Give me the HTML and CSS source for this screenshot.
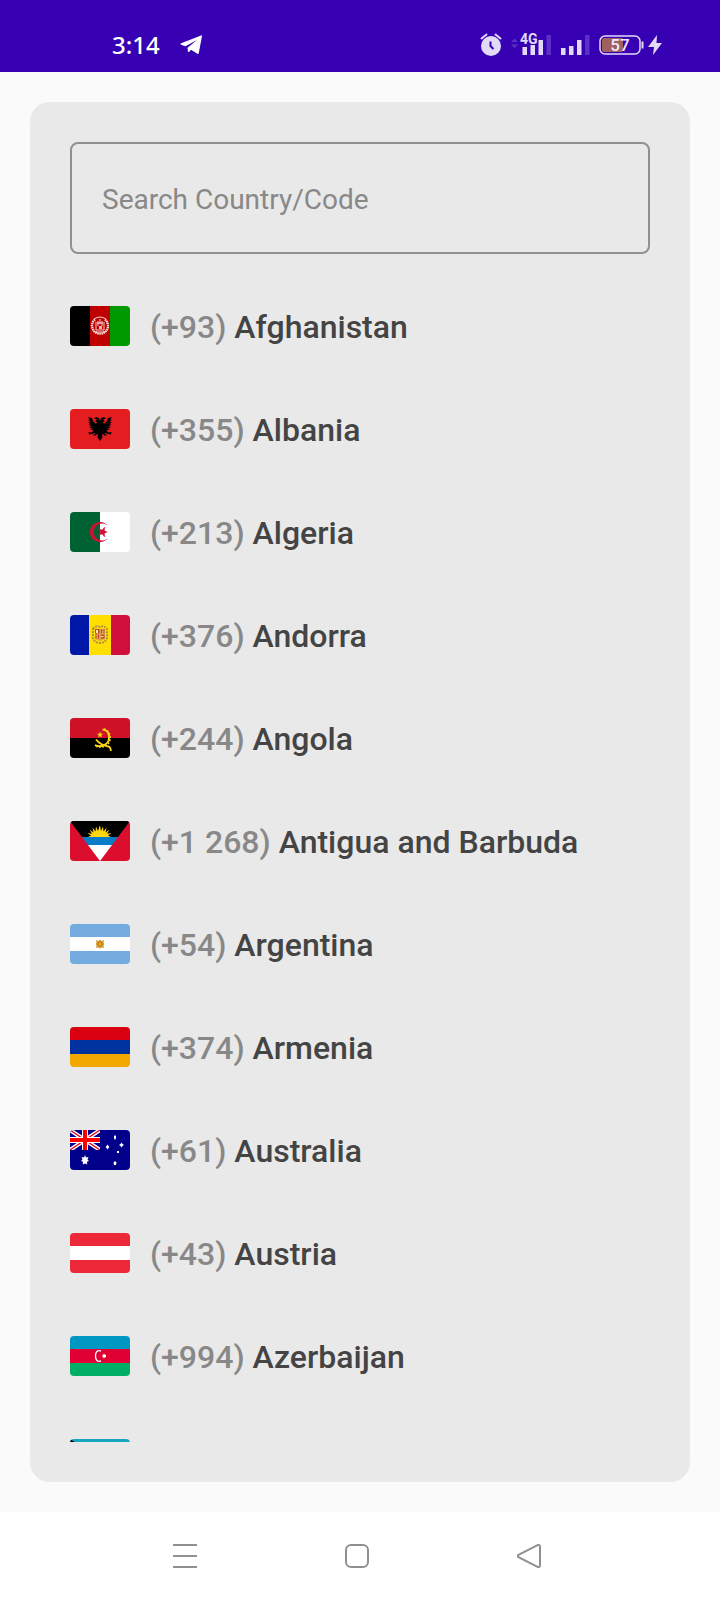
FILE: index.html
```html
<!DOCTYPE html>
<html lang="en">
<head>
<meta charset="utf-8">
<meta name="viewport" content="width=device-width, initial-scale=1">
<title>Select country</title>
<link rel="stylesheet" href="styles.css">
</head>
<body>
<div class="app">
  <header class="status">
    <div class="status-left">
      <time class="clock">3:14</time>
      <svg width="23" height="20" viewBox="0 0 23 20" aria-hidden="true"><path d="M22 1 L18.800 18 Q18.500 19.400 17 18.600 L11 14.700 L9.500 16.500 Q8 18 7.800 15.500 L7.500 12.800 L17 5 L5.500 11.200 L1 9.700 Q-.3 9 1.200 8.200 L21 .4 Q22.300 0 22 1Z" fill="#fff"/></svg>
    </div>
    <div class="status-right">
      <svg width="22" height="24" viewBox="0 0 22 24" aria-hidden="true"><g fill="none" stroke="#e3daf7"><path d="M1.500 5.500 L6.500 1.500 M15.500 1.500 L20.500 5.500" stroke-width="2" stroke-linecap="round"/></g><circle cx="11" cy="13" r="10" fill="#e3daf7"/><path d="M10.500 8.500V13L13.500 16" fill="none" stroke="#3700b3" stroke-width="2"/></svg>
      <svg width="41" height="30" viewBox="0 -4 41 30" aria-hidden="true"><path d="M0 8 L3.500 4.500 L7 8Z M0 10.500 L3.500 14 L7 10.500Z" fill="#5b30c4"/><path d="M11.500 13h4.500v8h-4.500z M19.500 11h4.500v10h-4.500z M27.500 6h4.500v15h-4.500z" fill="#e3daf7"/><path d="M35.500 1h4.500v20h-4.500z" fill="#5b30c4"/><text class="network" x="9" y="10">4G</text></svg>
      <svg width="29" height="22" viewBox="0 0 29 22" aria-hidden="true"><path d="M0 14h4.500v7h-4.500z M8 12h4.500v9h-4.500z M16 6h4.500v15h-4.500z" fill="#e3daf7"/><path d="M24 1h4.500v20h-4.500z" fill="#5b30c4"/></svg>
      <svg class="battery" width="45" height="22" viewBox="0 0 45 22" role="img" aria-label="Battery 57 percent"><rect x="3" y="4" width="21" height="14" rx="2" fill="#a0605f"/><rect x="1" y="2" width="40" height="18" rx="5" fill="none" stroke="#e3daf7" stroke-width="1.500"/><path d="M43.500 7.500v7" stroke="#e3daf7" stroke-width="2"/><text class="charge" x="21" y="17" text-anchor="middle">57</text></svg>
      <svg width="14" height="22" viewBox="0 0 14 22" aria-hidden="true"><path d="M9 1 L0 13 H6 L5 21 L14 9 H8.500Z" fill="#e3daf7"/></svg>
    </div>
  </header>

  <main class="content">
    <section class="card">
      <input class="search" type="text" placeholder="Search Country/Code" aria-label="Search Country/Code">
      <ul class="list">
        <li class="row">
          <svg class="flag" viewBox="0 0 60 40" aria-hidden="true"><path fill="#000" d="M0 0h20v40H0z"/><path fill="#bf0000" d="M20 0h20v40H20z"/><path fill="#090" d="M40 0h20v40H40z"/><g fill="none" stroke="#fff"><path d="M25 13.500A8 8 0 1 0 35 13.500" stroke-width="2.200" stroke-dasharray="1.500 .6" opacity=".9"/><path d="M24 13q6-4 12 0M26 16v8h8v-8M27 17h6M28 15v5M32 15v5M25 26h10M30 13v5" opacity=".8"/></g><path d="M29 20h3v3h-3z" fill="#e7bcab"/></svg>
          <span class="label"><span class="code">(+93)</span> Afghanistan</span>
        </li>
        <li class="row">
          <svg class="flag" viewBox="0 0 60 40" aria-hidden="true"><path fill="#e41e20" d="M0 0h60v40H0z"/><path d="M30 12L29 9L26 8L24 9.500L27 10.500L25 12L27 13L26 15L23 12L22 9L18 8L20 10.500L18 10.500L20.500 13L18 13L21 15.500L18.500 15.500L21.500 18L19 18L22.500 20L20 20.500L24 21.500L21 23.500L18.500 23L19 25.500L22 25L25.500 23.500L23 26.500L25.500 26.500L28 24.500L27.500 28.500L30 32L32.500 28.500L32 24.500L34.500 26.500L37 26.500L34.500 23.500L38 25L41 25.500L41.500 23L39 23.500L36 21.500L40 20.500L37.500 20L41 18L38.500 18L41.500 15.500L39 15.500L42 13L39.500 13L42 10.500L40 10.500L42 8L38 9L37 12L34 15L33 13L35 12L33 10.500L36 9.500L34 8L31 9Z"/></svg>
          <span class="label"><span class="code">(+355)</span> Albania</span>
        </li>
        <li class="row">
          <svg class="flag" viewBox="0 0 60 40" aria-hidden="true"><path fill="#fff" d="M0 0h60v40H0z"/><path fill="#006233" d="M0 0h30v40H0z"/><path fill="#d21034" d="M37.500 13.500A10 10 0 1 0 37.500 26.500A8.400 8.400 0 1 1 37.500 13.500ZM38 20l-3.300 1.300.1 4.200-2.600-3.300-4.200 1.300 2.400-3.500-2.400-3.500 4.200 1.300 2.600-3.300-.1 4.200z"/></svg>
          <span class="label"><span class="code">(+213)</span> Algeria</span>
        </li>
        <li class="row">
          <svg class="flag" viewBox="0 0 60 40" aria-hidden="true"><path fill="#0018a8" d="M0 0h19v40H0z"/><path fill="#fedf00" d="M19 0h22v40H19z"/><path fill="#d0103a" d="M41 0h19v40H41z"/><path d="M23 14q3-4 7-2q4-2 7 2v9q-2 5-7 5t-7-5z" fill="none" stroke="#b3923f" stroke-width="2" stroke-dasharray="2 1"/><path fill="#d9a34c" d="M25 14h10v10l-5 2-5-2z"/><path fill="#c7462b" d="M25 14h4.500v4.500H25zM25.500 19.500h1v4h-1zM28 19.500h1v4h-1zM31 14h1v4h-1zM33.500 14h1v4h-1zM31 19.500h3.500v4H31z"/><path fill="#ffedb1" d="M26 15h2v3h-2zM31 21h2.500v1H31z"/></svg>
          <span class="label"><span class="code">(+376)</span> Andorra</span>
        </li>
        <li class="row">
          <svg class="flag" viewBox="0 0 60 40" aria-hidden="true"><path fill="#ce1126" d="M0 0h60v20H0z"/><path fill="#000" d="M0 20h60v20H0z"/><g fill="none" stroke="#f9d616"><path d="M32.500 11.500C41 12 41.500 25 33 27.500Q28.500 29 25 27" stroke-width="2"/><path d="M34 11C42.500 13 42 27 34 28.500Q29 30 25 28" stroke-width="1.500" stroke-dasharray="1.800 1.500"/><path d="M26 21.500q4 5.500 14 7.500M40 29l1 4" stroke-width="1.800"/></g><path fill="#f9d616" d="M30 13.500l.8 2.200 2.400.1-1.900 1.500.7 2.300-2-1.300-2 1.300.7-2.300-1.900-1.500 2.400-.1z"/></svg>
          <span class="label"><span class="code">(+244)</span> Angola</span>
        </li>
        <li class="row">
          <svg class="flag" viewBox="0 0 60 40" aria-hidden="true"><path fill="#db0f2d" d="M0 0h60v40H0z"/><path fill="#000" d="M0 0h60L48 16H12z"/><path fill="#0b7dc8" d="M12 16h36l-6 8H18z"/><path fill="#fff" d="M18 24h24L30 40z"/><path fill="#ffd60f" d="M18 16l3-1.500-3.500-2.500 4.500.8-2.500-4.300 4 3-1-5 3 4 .5-5 2 4.500L30 4l1 6 2-4.500.5 5 3-4-1 5 4-3-2.500 4.300 4.500-.8-3.500 2.500 3 1.500z"/></svg>
          <span class="label"><span class="code">(+1 268)</span> Antigua and Barbuda</span>
        </li>
        <li class="row">
          <svg class="flag" viewBox="0 0 60 40" aria-hidden="true"><path fill="#74acdf" d="M0 0h60v40H0z"/><path fill="#fff" d="M0 13h60v14H0z"/><path fill="#d49a36" d="M26 16l2.500 1 1.500-1.500 1.500 1.500 2.500-1-.5 2.500 1 1.500-1 1.500.5 2.500-2.500-.5-1.500 1-1.500-1-2.500.5.500-2.500-1-1.500 1-1.500z"/><circle cx="30" cy="20" r="2" fill="#f6b40e" stroke="#b5701a"/></svg>
          <span class="label"><span class="code">(+54)</span> Argentina</span>
        </li>
        <li class="row">
          <svg class="flag" viewBox="0 0 60 40" aria-hidden="true"><path fill="#d90012" d="M0 0h60v13H0z"/><path fill="#0033a0" d="M0 13h60v14H0z"/><path fill="#f2a800" d="M0 27h60v13H0z"/></svg>
          <span class="label"><span class="code">(+374)</span> Armenia</span>
        </li>
        <li class="row">
          <svg class="flag" viewBox="0 0 60 40" aria-hidden="true"><path fill="#00008b" d="M0 0h60v40H0z"/><svg width="30" height="20" viewBox="0 0 30 20"><path d="M0 0L30 20M30 0L0 20" stroke="#fff" stroke-width="4"/><path d="M0 0L30 20M30 0L0 20" stroke="#e0001c" stroke-width="1.300"/><path d="M15 0v20M0 10h30" stroke="#fff" stroke-width="6"/><path d="M15 0v20M0 10h30" stroke="red" stroke-width="4"/></svg><g fill="#fff"><path d="M15 25l1 2.500 2.500-.5-1 2.500 1.500 1.500-2 .8.200 2.700-2.200-1-2.200 1 .2-2.700-2-.8 1.500-1.500-1-2.500 2.500.5z"/><path d="M45 5l1 1.300v2L45 10l-1-1.700v-2zM37.500 14.500l1 1.500 1 1-1 1-1 1.500-1-1.500-1-1 1-1zM51.500 12.500l1 1.500 1.500 1-1.500 1-1 1.500-1-1.500-1.500-1 1.500-1zM45 31l1.500 1.500L46 35h-2l-.5-2.500zM47 21h2v2h-2z"/></g></svg>
          <span class="label"><span class="code">(+61)</span> Australia</span>
        </li>
        <li class="row">
          <svg class="flag" viewBox="0 0 60 40" aria-hidden="true"><path fill="#ed2939" d="M0 0h60v40H0z"/><path fill="#fff" d="M0 13h60v14H0z"/></svg>
          <span class="label"><span class="code">(+43)</span> Austria</span>
        </li>
        <li class="row">
          <svg class="flag" viewBox="0 0 60 40" aria-hidden="true"><path fill="#0098c3" d="M0 0h60v13H0z"/><path fill="#e00034" d="M0 13h60v14H0z"/><path fill="#00ae65" d="M0 27h60v13H0z"/><path d="M31 15Q25.500 13.500 25.500 20T31 25" fill="none" stroke="#fff" stroke-width="1.300"/><path fill="#fff" d="M34 18l2 1v2l-2 1-1.500-1v-2z"/></svg>
          <span class="label"><span class="code">(+994)</span> Azerbaijan</span>
        </li>
        <li class="row">
          <svg class="flag" viewBox="0 0 60 40" aria-hidden="true"><path fill="#18a5c0" d="M0 0h60v40H0z"/><path fill="#ffc72c" d="M0 13h60v14H0z"/><path fill="#000" d="M0 0l32 20L0 40z"/></svg>
        </li>
      </ul>
    </section>
  </main>

  <nav class="navbar" aria-label="System navigation">
    <button class="nav-button" type="button" aria-label="Recent apps"><svg width="24" height="24" viewBox="0 0 24 24"><path d="M0 1h24M0 12h24M0 23h24"/></svg></button>
    <button class="nav-button" type="button" aria-label="Home"><svg width="24" height="24" viewBox="0 0 24 24"><rect x="1" y="1" width="22" height="22" rx="5"/></svg></button>
    <button class="nav-button" type="button" aria-label="Back"><svg width="24" height="24" viewBox="0 0 24 24"><path d="M1.500 10.800L20.500 1.100Q23 .3 23 3v18Q23 23.700 20.500 22.900L1.500 13.200Q0 12 1.500 10.800Z"/></svg></button>
  </nav>
</div>
</body>
</html>
```
FILE: styles.css
```css
* {
  box-sizing: border-box;
}

body {
  margin: 0;
  font-family: Roboto, "Liberation Sans", sans-serif;
  background: #fafafa;
}

.app {
  display: flex;
  flex-direction: column;
  height: 100vh;
}

.status {
  display: flex;
  flex: none;
  align-items: center;
  justify-content: space-between;
  height: 72px;
  padding: 18px 58px 0 112px;
  color: #fff;
  background: #3700b3;
}

.status svg {
  display: block;
  flex: none;
}

.status-left {
  display: flex;
  align-items: center;
  gap: 20px;
}

.status-right {
  display: flex;
  align-items: center;
  gap: 9px;
}

.clock {
  font-family: "Noto Sans", sans-serif;
  font-size: 24px;
  line-height: 28px;
  font-weight: 500;
}

.network {
  font-size: 14px;
  font-weight: 700;
  fill: #e3daf7;
  stroke: #3700b3;
  stroke-width: 2px;
  paint-order: stroke;
}

.charge {
  font-size: 17px;
  font-weight: 500;
  fill: #f0e8fa;
}

.battery {
  margin-right: -5px;
}

.content {
  display: flex;
  flex: 1;
  min-height: 0;
  padding: 30px;
}

.card {
  display: flex;
  flex: 1;
  flex-direction: column;
  min-width: 0;
  padding: 40px;
  border-radius: 20px;
  background: #e9e9e9;
}

.search {
  flex: none;
  width: 100%;
  height: 112px;
  padding: 2px 30px 0;
  border: 2px solid #909090;
  border-radius: 8px;
  color: #444;
  background: transparent;
  font-family: inherit;
  font-size: 28px;
}

.search::placeholder {
  color: #888;
  opacity: 1;
}

.list {
  display: flex;
  flex: 1;
  flex-direction: column;
  gap: 61px;
  min-height: 0;
  margin: 0;
  padding: 52px 0 0;
  overflow: hidden;
  list-style: none;
}

.row {
  display: flex;
  flex: none;
  align-items: flex-start;
  gap: 20px;
  min-height: 42px;
}

.flag {
  display: block;
  flex: none;
  width: 60px;
  height: 40px;
  border-radius: 4px;
}

.label {
  color: #444;
  font-size: 32px;
  font-weight: 500;
  line-height: 42px;
  white-space: nowrap;
}

.code {
  color: #888;
}

.navbar {
  display: flex;
  flex: none;
  align-items: center;
  justify-content: center;
  gap: 148px;
  height: 88px;
  padding-right: 6px;
  background: #fff;
}

.nav-button {
  padding: 0;
  border: 0;
  background: none;
}

.nav-button svg {
  display: block;
  fill: none;
  stroke: #909090;
  stroke-width: 2px;
}
```
